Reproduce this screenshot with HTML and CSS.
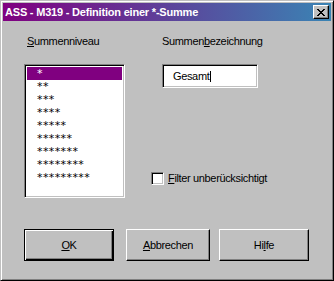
FILE: index.html
```html
<!DOCTYPE html>
<html lang="de">
<head>
  <meta charset="UTF-8" />
  <title>ASS - M319 - Definition einer *-Summe</title>
  <link rel="stylesheet" href="styles.css">
</head>
<body>
  <div class="window">
    <div class="titlebar">
      <span class="title">ASS - M319 - Definition einer *-Summe</span>
      <button class="close" type="button">
        <svg width="8" height="7" viewBox="0 0 8 7" shape-rendering="crispEdges">
          <path d="M0 0h2v1h-2zM6 0h2v1h-2zM1 1h2v1h-2zM5 1h2v1h-2zM2 2h4v1h-4zM3 3h2v1h-2zM2 4h4v1h-4zM1 5h2v1h-2zM5 5h2v1h-2zM0 6h2v1h-2zM6 6h2v1h-2z" fill="#000"/>
        </svg>
      </button>
    </div>

    <div class="content">
      <div class="fields">
        <div class="col-left">
          <div class="label"><u>S</u>ummenniveau</div>
          <ul class="listbox">
            <li class="selected">*</li>
            <li>**</li>
            <li>***</li>
            <li>****</li>
            <li>*****</li>
            <li>******</li>
            <li>*******</li>
            <li>********</li>
            <li>*********</li>
          </ul>
        </div>

        <div class="col-right">
          <div class="label">Summen<u>b</u>ezeichnung</div>
          <div class="textbox"><span class="value">Gesamt</span></div>
          <label class="check">
            <span class="box"></span>
            <span><u>F</u>ilter unberücksichtigt</span>
          </label>
        </div>
      </div>

      <div class="buttons">
        <button class="btn default" type="button"><span><u>O</u>K</span></button>
        <button class="btn cancel" type="button"><span><u>A</u>bbrechen</span></button>
        <button class="btn help" type="button"><span>Hi<u>l</u>fe</span></button>
      </div>
    </div>
  </div>
</body>
</html>
```

FILE: styles.css
```css
body {
  margin: 0;
  background: #c0c0c0;
  font-family: "Liberation Sans", Arial, sans-serif;
  font-size: 11px;
  letter-spacing: -0.35px;
  color: #000;
}
.window {
  width: 334px;
  height: 281px;
  box-sizing: border-box;
  border: 1px solid;
  border-color: #c0c0c0 #000 #000 #c0c0c0;
  box-shadow: inset 1px 1px #fff, inset -1px -1px #808080;
  padding: 2px;
  background: #c0c0c0;
}
.titlebar {
  height: 18px;
  display: flex;
  align-items: center;
  justify-content: space-between;
  background: linear-gradient(to right, #800080, #3a84b4);
  padding: 0 2px;
}
.title {
  color: #fff;
  font-weight: bold;
  font-size: 11px;
  letter-spacing: -0.2px;
  white-space: nowrap;
}
.close {
  width: 16px;
  height: 14px;
  padding: 0;
  display: flex;
  align-items: center;
  justify-content: center;
  background: #c0c0c0;
  border: 1px solid;
  border-color: #fff #000 #000 #fff;
  box-shadow: inset -1px -1px #808080;
}

.content {
  padding: 14px 0 0 21px;
}
.fields {
  display: flex;
  gap: 26px;
}
.col-left {
  width: 101px;
  flex: none;
}
.col-right {
  display: flex;
  flex-direction: column;
  align-items: flex-start;
}
.label {
  line-height: 13px;
  height: 13px;
  margin-left: 3px;
  white-space: nowrap;
}
.col-right .label {
  margin-left: 11px;
}
.listbox {
  list-style: none;
  margin: 16px 0 0 0;
  height: 134px;
  box-sizing: border-box;
  background: #fff;
  border: 1px solid;
  border-color: #808080 #fff #fff #808080;
  box-shadow: inset 1px 1px #000, inset -1px -1px #c0c0c0;
  padding: 2px;
}
.listbox li {
  height: 13px;
  line-height: 13px;
  padding-left: 10px;
  font-family: "DejaVu Sans", sans-serif;
  font-size: 11px;
  letter-spacing: 0.4px;
}
.listbox li.selected {
  background: #800080;
  color: #fff;
}
.textbox {
  margin: 16px 0 0 11px;
  width: 96px;
  height: 24px;
  box-sizing: border-box;
  background: #fff;
  border: 1px solid;
  border-color: #808080 #fff #fff #808080;
  box-shadow: inset 1px 1px #000, inset -1px -1px #c0c0c0;
  padding-left: 10px;
  display: flex;
  align-items: center;
}
.value {
  border-right: 1px solid #000;
  padding-right: 1px;
  line-height: 11px;
}
.check {
  margin-top: 84px;
  display: flex;
  align-items: center;
  gap: 4px;
  line-height: 13px;
  white-space: nowrap;
}
.box {
  width: 13px;
  height: 13px;
  box-sizing: border-box;
  background: #fff;
  border: 1px solid;
  border-color: #808080 #fff #fff #808080;
  box-shadow: inset 1px 1px #000, inset -1px -1px #c0c0c0;
}

.buttons {
  display: flex;
  margin-top: 31px;
}
.btn {
  height: 32px;
  box-sizing: border-box;
  padding: 0;
  background: #c0c0c0;
  font: inherit;
  letter-spacing: inherit;
  color: #000;
  border: 1px solid;
  border-color: #fff #000 #000 #fff;
  box-shadow: inset -1px -1px #808080;
  display: flex;
  align-items: center;
  justify-content: center;
}
.btn.default {
  width: 90px;
  border: 1px solid #000;
  box-shadow: inset 1px 1px #fff, inset -1px -1px #000, inset -2px -2px #808080;
}
.btn.cancel {
  width: 84px;
  margin-left: 12px;
}
.btn.help {
  width: 90px;
  margin-left: 9px;
}
```
